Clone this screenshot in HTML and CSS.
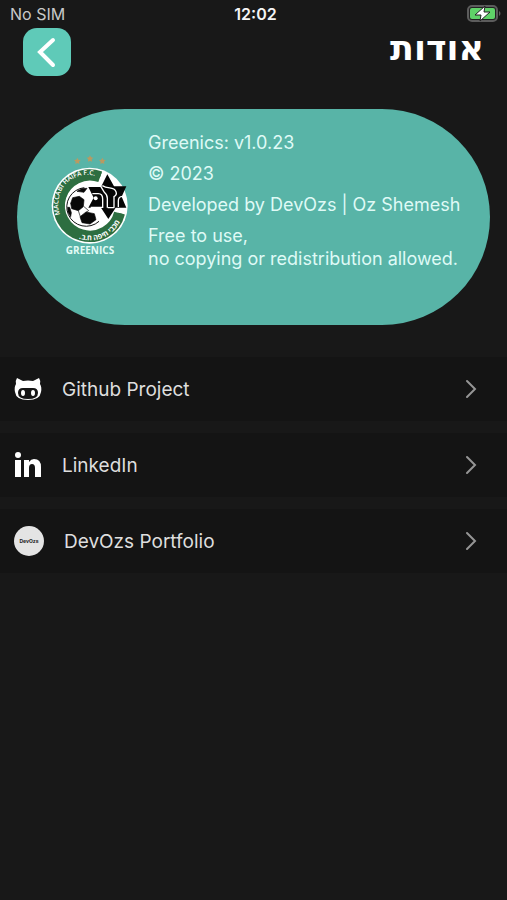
FILE: index.html
```html
<!DOCTYPE html>
<html lang="he">
<head>
    <meta charset="UTF-8">
    <meta name="viewport" content="width=device-width, initial-scale=1.0">
    <title>אודות</title>
    <link rel="stylesheet" href="styles.css">
</head>
<body>
    <div class="statusbar">
        <span class="carrier">No SIM</span>
        <span class="clock">12:02</span>
        <svg class="battery" viewBox="0 0 34 18" aria-hidden="true">
            <rect x="1" y="1" width="29" height="15" rx="4" fill="#222" stroke="#5c5c5c" stroke-width="2"/>
            <rect x="3" y="3" width="25" height="11" rx="2" fill="#5fd268"/>
            <path d="M32 6v5c2-1 2-4 0-5z" fill="#5c5c5c"/>
            <path d="M18 1L8 10h6l-1 6 10-9h-6z" fill="#fff" stroke="#222" stroke-width="1"/>
        </svg>
    </div>

    <header class="topbar">
        <button class="back" type="button" aria-label="חזרה">
            <svg viewBox="0 0 48 48" aria-hidden="true">
                <path d="M30 12L17 24l13 13" fill="none" stroke="#fff" stroke-width="4" stroke-linecap="round"/>
            </svg>
        </button>
        <h1 dir="rtl">אודות</h1>
    </header>

    <main>
        <section class="card">
            <svg class="logo" viewBox="34 30 234 312" role="img" aria-label="Greenics">
                <!-- stars -->
                <g fill="#b99a62">
                    <path id="star" d="M113 38l3 6 7 1-5 5 1 7-6-3-6 3 1-7-5-5 7-1z"/>
                    <use href="#star" x="38" y="-7"/>
                    <use href="#star" x="75"/>
                </g>
                <!-- badge -->
                <circle cx="150" cy="182" r="114" fill="#fff"/>
                <path d="M246 206A99 99 0 1 1 184 89" fill="none" stroke="#2d6e40" stroke-width="20"/>
                <path d="M238 204A90 90 0 1 1 181 97" fill="none" stroke="#2d6e40" stroke-width="30"/>
                <path id="ring-top" d="M71 226A87 87 0 0 1 192 105" fill="none"/>
                <path id="ring-bottom" d="M70 247A102 102 0 0 0 252 192" fill="none"/>
                <text class="ring-text"><textPath href="#ring-top" startOffset="48%">MACCABI HAIFA F.C.</textPath></text>
                <text class="ring-text ring-hebrew"><textPath href="#ring-bottom" startOffset="54%">מכבי חיפה ח.ב.</textPath></text>
                <!-- ball -->
                <circle cx="140" cy="184" r="57" fill="#fff"/>
                <path d="M178 229A58 58 0 1 1 134 128" fill="none" stroke="#111" stroke-width="3"/>
                <g fill="#080808" stroke="#080808" stroke-width="2" stroke-linejoin="round">
                    <path d="M99 158l20-4 14 10-2 21-15 12-20-6-3-16z"/>
                    <path d="M121 215l18-14 25 5 5 18-18 13-24-4z"/>
                    <path d="M84 187l6 0 5 16-2 12-8-14z"/>
                    <path d="M112 139l14-8 16-1-9 12z"/>
                    <path d="M116 197l6 18M133 185l14 12-8 5" fill="none"/>
                </g>
                <!-- star of david -->
                <path d="M203 88l20 36h37l-14 31 14 33h-32l-22 34-22-34h-38l16-30-16-32h38z" fill="#050505"/>
                <path d="M182 122l12 20c5 4 9 9 9 18v28M188 122c18 12 34 1 41 18 3 7-1 12-6 15v33M158 146h18c10 0 13 8 13 17v24h-36M204 188h20M236 186v-19c0-8 3-12 12-13" fill="none" stroke="#fff" stroke-width="4"/>
                <circle cx="168" cy="160" r="6" fill="#fff"/>
                <text class="logo-name" x="151" y="328">GREENICS</text>
            </svg>
            <div class="details" lang="en">
                <p>Greenics: v1.0.23</p>
                <p>© 2023</p>
                <p>Developed by DevOzs | Oz Shemesh</p>
                <p>Free to use,<br>no copying or redistribution allowed.</p>
            </div>
        </section>

        <nav class="links" lang="en">
            <a href="#github">
                <svg class="icon" viewBox="0 0 28 28" aria-hidden="true">
                    <path d="M3 3l6 3q5-1 10 0l6-3q2 3 1 6 2 3 1 8-1 8-13 8T1 17q-1-5 1-8-1-3 1-6z" fill="#fff"/>
                    <path d="M9 13h10q5 0 5 5 0 6-10 6T4 18q0-5 5-5z" fill="#151515"/>
                    <ellipse cx="9" cy="18" rx="2" ry="3" fill="#fff"/>
                    <ellipse cx="19" cy="18" rx="2" ry="3" fill="#fff"/>
                </svg>
                <span class="label">Github Project</span>
                <svg class="chevron" viewBox="0 0 12 20" aria-hidden="true"><path d="M2 2l8 8-8 8"/></svg>
            </a>
            <a href="#linkedin">
                <svg class="icon" viewBox="0 0 28 28" aria-hidden="true">
                    <g fill="#fff">
                        <circle cx="4" cy="4" r="3"/>
                        <path d="M1 9h6v17H1zM10 9h5v2q2-3 5-3 7 0 7 8v10h-6v-9q0-4-3-4t-3 4v9h-5z"/>
                    </g>
                </svg>
                <span class="label">LinkedIn</span>
                <svg class="chevron" viewBox="0 0 12 20" aria-hidden="true"><path d="M2 2l8 8-8 8"/></svg>
            </a>
            <a href="#portfolio">
                <span class="avatar">DevOzs</span>
                <span class="label">DevOzs Portfolio</span>
                <svg class="chevron" viewBox="0 0 12 20" aria-hidden="true"><path d="M2 2l8 8-8 8"/></svg>
            </a>
        </nav>
    </main>
</body>
</html>
```

FILE: styles.css
```css
body {
    margin: 0;
    min-height: 100vh;
    background-color: #181818;
    color: #e4e4e4;
    font-family: Inter, "Open Sans", sans-serif;
}
.statusbar {
    display: grid;
    grid-template-columns: 1fr auto 1fr;
    align-items: center;
    height: 28px;
    padding: 0 6px 0 10px;
    font-size: 16px;
}
.carrier {
    color: #c8c8c8;
}
.clock {
    color: #f4f4f4;
    font-weight: 600;
}
.battery {
    width: 34px;
    height: 18px;
    justify-self: end;
}
.topbar {
    display: flex;
    justify-content: space-between;
    align-items: center;
    padding: 0 23px;
}
.back {
    width: 48px;
    height: 48px;
    padding: 0;
    border: none;
    border-radius: 14px;
    background-color: #5fcab8;
    cursor: pointer;
}
.back svg {
    display: block;
}
.topbar h1 {
    margin: 0;
    padding-bottom: 8px;
    color: white;
    font-family: "DejaVu Sans", sans-serif;
    font-size: 35px;
    line-height: 40px;
}
.card {
    display: flex;
    align-items: flex-start;
    gap: 19px;
    min-height: 194px;
    margin: 33px 17px 32px;
    padding: 22px 10px 0 34px;
    border-radius: 108px;
    background-color: #58b4a7;
}
.logo {
    flex: none;
    width: 78px;
    height: 104px;
    margin-top: 24px;
}
.ring-text {
    fill: white;
    font-family: "Open Sans", sans-serif;
    font-size: 20px;
    font-weight: 600;
    text-anchor: middle;
}
.ring-hebrew {
    direction: rtl;
    font-size: 22px;
    font-weight: 700;
}
.logo-name {
    fill: #e2fbf6;
    font-family: "Open Sans", sans-serif;
    font-size: 30px;
    font-weight: 700;
    text-anchor: middle;
}
.details {
    color: #dffaf6;
    font-size: 18px;
    line-height: 23px;
}
.details p {
    margin: 0 0 8px;
}
.links {
    display: flex;
    flex-direction: column;
    gap: 12px;
}
.links a {
    display: flex;
    align-items: center;
    height: 64px;
    padding: 0 30px 0 14px;
    background-color: #141414;
    color: #dedede;
    font-size: 19px;
    text-decoration: none;
}
.icon {
    width: 28px;
    height: 28px;
    margin-right: 20px;
}
.avatar {
    display: flex;
    align-items: center;
    justify-content: center;
    width: 30px;
    height: 30px;
    margin-right: 20px;
    border-radius: 50%;
    background-color: #e4e4e4;
    color: #222;
    font-size: 5px;
    font-weight: 700;
}
.label {
    flex: 1;
}
.chevron {
    width: 12px;
    height: 20px;
    fill: none;
    stroke: #969696;
    stroke-width: 2;
    stroke-linecap: round;
}
```
